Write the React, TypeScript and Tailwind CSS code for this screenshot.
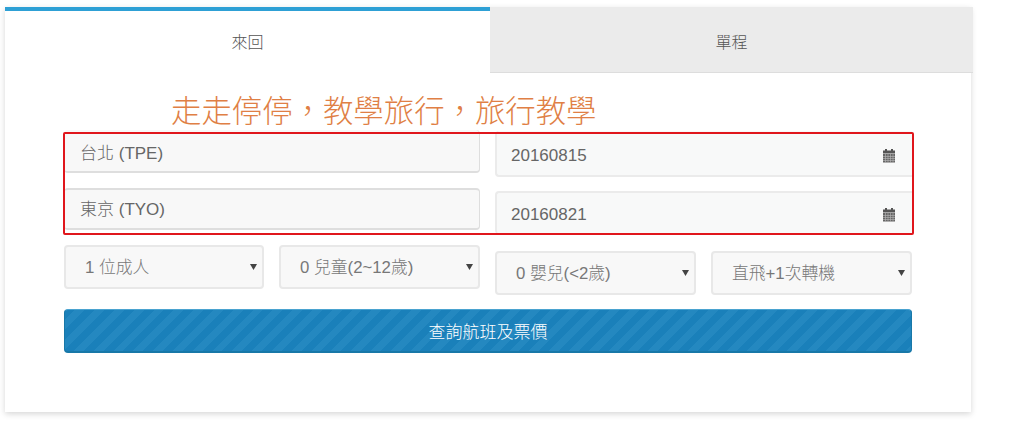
const fontStack = "font-['Liberation_Sans','Noto_Sans_CJK_TC',sans-serif]"

function CalendarIcon() {
  return (
    <svg viewBox="0 0 14 14" className="h-[14px] w-[14px] shrink-0" aria-hidden="true">
      <rect x="3" y="0" width="2" height="3" fill="#555" />
      <rect x="9" y="0" width="2" height="3" fill="#555" />
      <rect x="1" y="1.5" width="12" height="3" fill="#555" />
      <rect x="1" y="5" width="12" height="8.5" fill="#666" />
      <path d="M1 7.5h12M1 9.5h12M1 11.5h12M3.5 5v8.5M6 5v8.5M8.5 5v8.5M11 5v8.5" stroke="#bbb" strokeWidth="0.6" />
    </svg>
  )
}

function TextField({ value, className }: { value: string; className: string }) {
  return (
    <input
      defaultValue={value}
      className={`block w-full rounded-[4px] bg-[#f8f8f8] pl-4 text-[17px] font-light text-[#666] outline-none ${className}`}
    />
  )
}

function DateField({ value, className }: { value: string; className: string }) {
  return (
    <div className={`flex items-center justify-between rounded-l-[4px] border-l-2 border-[#ebebeb] bg-[#f8f9f9] pl-[14px] pr-4 ${className}`}>
      <span className="text-[17px] text-[#666]">{value}</span>
      <CalendarIcon />
    </div>
  )
}

function SelectBox({ label, width }: { label: string; width: string }) {
  return (
    <div className={`flex h-[44px] items-center justify-between rounded-[4px] border-2 border-[#e8e8e8] bg-[#f8f8f8] pl-[19px] pr-[5px] ${width}`}>
      <span className="pt-[1px] text-[16.8px] font-light text-[#777]">{label}</span>
      <svg viewBox="0 0 7 6" className="h-[6px] w-[7px]" aria-hidden="true">
        <path d="M0 0h7L3.5 6z" fill="#444" />
      </svg>
    </div>
  )
}

export default function App() {
  return (
    <div className={`h-[429px] w-[1024px] overflow-hidden bg-white pl-[5px] pt-[7px] ${fontStack}`}>
      <div className="relative h-[405px] w-[966px] bg-white shadow-[0_2px_6px_rgba(0,0,0,0.16)]">
        <div className="flex h-[66px] w-[968px]">
          <div className="flex w-[485px] items-center justify-center border-t-4 border-[#2ea0d5] bg-white pt-[2px] text-[16px] font-light text-[#555]">
            來回
          </div>
          <div className="flex w-[483px] items-center justify-center border-b border-[#ddd] bg-[#ebebeb] pt-[6px] text-[16px] font-light text-[#555]">
            單程
          </div>
        </div>

        <div className="pl-[59px]">
          <h1 className="ml-[107px] mt-[20px] h-[37px] text-[30.4px] font-light leading-[37px] text-[#e07f45]">
            走走停停，教學旅行，旅行教學
          </h1>

          <div className="flex gap-[15px]">
            <div className="w-[416px]">
              <TextField value="台北 (TPE)" className="h-[43px] border-b-2 border-r border-[#dedede] pt-[2px]" />
              <TextField value="東京 (TYO)" className="mt-[15px] h-[42px] border-y-2 border-r border-[#dedede] pb-[4px]" />
              <div className="mt-[15px] flex gap-[15px]">
                <SelectBox label="1 位成人" width="w-[200px]" />
                <SelectBox label="0 兒童(2~12歲)" width="w-[201px]" />
              </div>
            </div>
            <div className="w-[417px]">
              <DateField value="20160815" className="mt-[1px] h-[46px] rounded-bl-[4px] border-b-2 pt-[5px]" />
              <DateField value="20160821" className="mt-[14px] h-[43px] rounded-tl-[4px] border-t-2 pt-[2px]" />
              <div className="mt-[17px] flex gap-[15px]">
                <SelectBox label="0 嬰兒(<2歲)" width="w-[201px]" />
                <SelectBox label="直飛+1次轉機" width="w-[201px]" />
              </div>
            </div>
          </div>

          <button
            type="button"
            className="mt-[14px] block h-[44px] w-[848px] rounded-[4px] border border-b-2 border-[#1878a8] border-t-[#4aa3d0] bg-[#1a80ba] bg-[repeating-linear-gradient(135deg,#1a80ba_0,#1a80ba_7px,#2488c0_7px,#2488c0_14px)] pt-[4px] text-[17px] font-light text-white"
          >
            查詢航班及票價
          </button>
        </div>

        <div className="pointer-events-none absolute left-[58px] top-[125px] h-[103px] w-[851px] rounded-[2px] border-2 border-[#e0161c]" />
      </div>
    </div>
  )
}
